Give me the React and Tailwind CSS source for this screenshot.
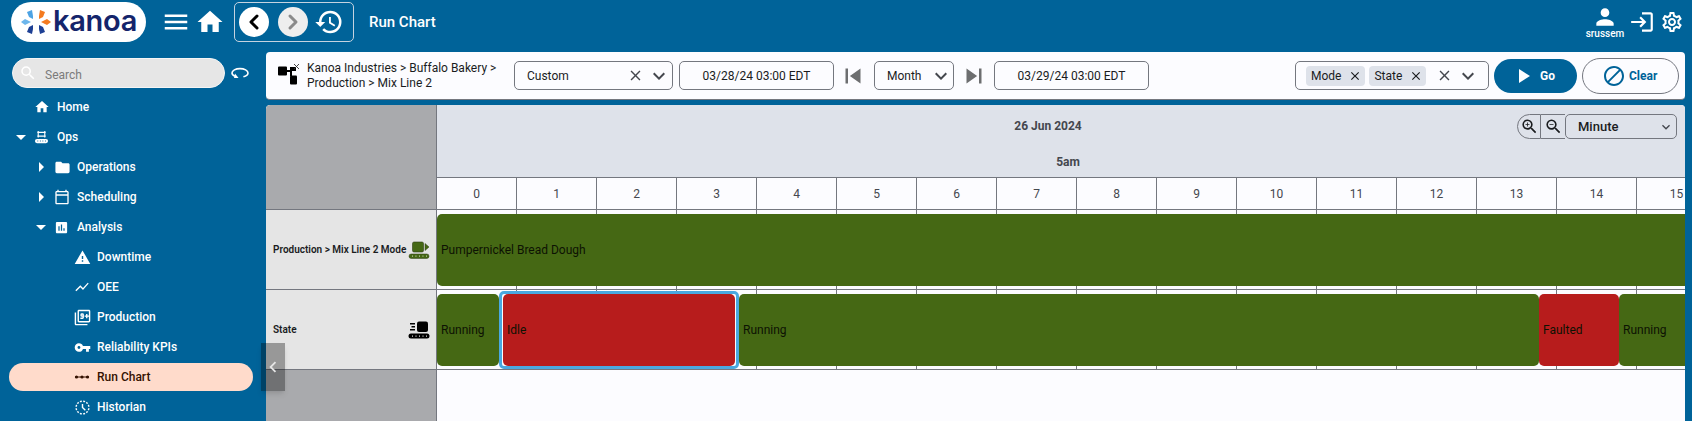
import {
  MdMenu, MdHome, MdHistory, MdPerson, MdLogin, MdOutlineSettings, MdChevronLeft,
  MdSearch, MdFolder, MdOutlineCalendarToday, MdAssessment, MdWarning, MdShowChart, MdOutlineFilter9Plus,
  MdVpnKey, MdOutlineHistoryToggleOff, MdArrowDropDown, MdArrowRight, MdClose, MdKeyboardArrowDown,
  MdSkipPrevious, MdSkipNext, MdPlayArrow, MdBlock, MdZoomIn, MdZoomOut,
} from 'react-icons/md'
import { ChevronLeft, ChevronRight } from 'lucide-react'

const TICKS = Array.from({ length: 16 }, (_, i) => i)

function Logo() {
  return (
    <div className="flex items-center w-[135px] h-[40px] rounded-full bg-white pl-[10px] gap-[2px]">
      <svg viewBox="0 0 30 26" className="w-[30px] h-[26px] shrink-0">
        <path d="M6 3l5-2 1 6 0 3-4-2z" fill="#4da3e4" />
        <path d="M18 7l1-6 5 2-2 5-4 2z" fill="#f47b20" />
        <path d="M0 13l4-3 6 3-6 3z" fill="#6db6ec" />
        <path d="M20 13l6-3 4 3-4 3z" fill="#f47b20" />
        <path d="M8 18l4-2 0 4-1 5-5-2z" fill="#1d3f94" />
        <path d="M18 16l4 2 2 5-5 2-1-5z" fill="#1d3f94" />
      </svg>
      <span className="font-['Inter',sans-serif] font-semibold text-[29px] leading-none tracking-[-0.3px] text-[#14246b] pb-[3px]">kanoa</span>
    </div>
  )
}

function TopBar() {
  return (
    <div className="flex items-center h-[52px] shrink-0 pb-[8px] pl-[11px] pr-[8px] text-white">
      <Logo />
      <MdMenu className="w-[30px] h-[30px] ml-[15px]" />
      <MdHome className="w-[30px] h-[30px] ml-[4px]" />
      <div className="flex items-center h-[40px] w-[120px] ml-[9px] border border-[#c5d3e0] rounded-[5px] pl-[4px]">
        <div className="flex items-center justify-center w-[30px] h-[30px] rounded-full bg-white text-black">
          <ChevronLeft className="w-[24px] h-[24px]" strokeWidth={3} />
        </div>
        <div className="flex items-center justify-center w-[30px] h-[30px] rounded-full bg-[#eeeeee] text-[#8a8a8a] ml-[9px]">
          <ChevronRight className="w-[24px] h-[24px]" strokeWidth={3} />
        </div>
        <MdHistory className="w-[30px] h-[30px] ml-[6px]" />
      </div>
      <span className="ml-[15px] text-[15px] font-medium">Run Chart</span>
      <div className="ml-auto flex items-center">
        <div className="flex flex-col items-center w-[40px] -mt-[1px]">
          <MdPerson className="w-[26px] h-[26px]" />
          <span className="text-[10px] font-medium leading-[10px] -mt-[1px]">srussem</span>
        </div>
        <MdLogin className="w-[26px] h-[26px] ml-[4px]" />
        <MdOutlineSettings className="w-[24px] h-[24px] ml-[5px]" />
      </div>
    </div>
  )
}

function ConveyorIcon({ className }) {
  return (
    <svg viewBox="0 0 16 16" className={className} fill="none" stroke="currentColor" strokeWidth="1.2">
      <path d="M4.5 1v7M11.5 1v7M3.5 2.5h9M3.5 6.5h9" />
      <rect x="1" y="9.5" width="14" height="4.5" rx="2.25" fill="currentColor" stroke="none" />
      <path d="M3.6 11.8h.9M6.3 11.8h.9M9 11.8h.9M11.7 11.8h.9" stroke="#006399" strokeWidth="1.1" />
    </svg>
  )
}

function RunChartIcon({ className }) {
  return (
    <svg viewBox="0 0 16 16" className={className}>
      <path d="M1 8h14" stroke="currentColor" strokeWidth="1" />
      <circle cx="2.5" cy="8" r="1.6" fill="currentColor" />
      <circle cx="8" cy="8" r="1.6" fill="currentColor" />
      <circle cx="13.5" cy="8" r="1.6" fill="currentColor" />
    </svg>
  )
}

// depth 0: Home/Ops, 1: Operations/Scheduling/Analysis, 2: leaves
const NAV = [
  { label: 'Home', icon: MdHome, depth: 0, size: 'w-[16px] h-[16px]' },
  { label: 'Ops', icon: ConveyorIcon, depth: 0, caret: 'open', size: 'w-[15px] h-[15px]' },
  { label: 'Operations', icon: MdFolder, depth: 1, caret: 'closed', size: 'w-[17px] h-[17px]' },
  { label: 'Scheduling', icon: MdOutlineCalendarToday, depth: 1, caret: 'closed', size: 'w-[16px] h-[16px]' },
  { label: 'Analysis', icon: MdAssessment, depth: 1, caret: 'open', size: 'w-[15px] h-[15px]' },
  { label: 'Downtime', icon: MdWarning, depth: 2, size: 'w-[17px] h-[17px]' },
  { label: 'OEE', icon: MdShowChart, depth: 2, size: 'w-[16px] h-[16px]' },
  { label: 'Production', icon: MdOutlineFilter9Plus, depth: 2, size: 'w-[17px] h-[17px]' },
  { label: 'Reliability KPIs', icon: MdVpnKey, depth: 2, size: 'w-[17px] h-[17px]' },
  { label: 'Run Chart', icon: RunChartIcon, depth: 2, active: true, size: 'w-[16px] h-[16px]' },
  { label: 'Historian', icon: MdOutlineHistoryToggleOff, depth: 2, size: 'w-[17px] h-[17px]' },
]

function NavItem({ item }) {
  const Icon = item.icon
  const iconBox = item.depth === 0 ? 'ml-[34px]' : item.depth === 1 ? 'ml-[54px]' : 'ml-[74px]'
  const textLeft = item.depth === 2 ? 'left-[97px]' : item.depth === 1 ? 'left-[77px]' : 'left-[57px]'
  const caretLeft = item.depth === 0 ? 'left-[9px]' : 'left-[29px]'
  return (
    <div className="relative flex items-center h-[30px] shrink-0">
      {item.active && <div className="absolute left-[9px] top-[1px] w-[244px] h-[28px] rounded-full bg-[#ffdbcb]" />}
      {item.caret === 'open' && <MdArrowDropDown className={`absolute ${caretLeft} w-[24px] h-[24px]`} />}
      {item.caret === 'closed' && <MdArrowRight className={`absolute ${caretLeft} w-[24px] h-[24px]`} />}
      <Icon className={`relative ${iconBox} ${item.size} ${item.active ? 'text-[#341100]' : ''}`} />
      <span className={`absolute ${textLeft} text-[12px] font-medium ${item.active ? 'text-[#341100]' : ''}`}>{item.label}</span>
    </div>
  )
}

function Sidebar() {
  return (
    <div className="w-[266px] shrink-0 text-white flex flex-col overflow-hidden">
      <div className="flex items-center h-[30px] mt-[6px] mb-[4px] shrink-0 pl-[12px]">
        <div className="flex items-center w-[213px] h-[30px] rounded-full bg-[#e6e6e6] border border-[#f5f5f5] pl-[6px]">
          <MdSearch className="w-[18px] h-[18px] text-white" />
          <span className="ml-[8px] pt-[3px] text-[12px] text-[#7b7b7b]">Search</span>
        </div>
        <svg viewBox="0 0 18 12" className="w-[18px] h-[12px] ml-[6px]" fill="none" stroke="white" strokeWidth="1.6">
          <path d="M4 9.2C2 8.4 1 7.3 1 6c0-2.4 3.6-4.4 8-4.4s8 2 8 4.4c0 1.6-1.8 3-4.6 3.8" />
          <path d="M4 6.5l3.5 4.5H3z" fill="white" stroke="none" />
        </svg>
      </div>
      {NAV.map((item) => <NavItem key={item.label} item={item} />)}
    </div>
  )
}

function SelectBox({ children, className }) {
  return (
    <div className={`flex items-center border border-[#74777f] rounded-[5px] h-[29px] text-[12px] text-[#1a1c1e] shrink-0 ${className}`}>
      {children}
    </div>
  )
}

function Chip({ label }) {
  return (
    <div className="flex items-center h-[20px] rounded-[4px] bg-[#dee2ea] pl-[5px] pr-[3px] gap-[7px]">
      <span>{label}</span>
      <MdClose className="w-[14px] h-[14px]" />
    </div>
  )
}

function Toolbar() {
  return (
    <div className="flex items-center h-[48px] shrink-0 bg-[#fcfcff] rounded-[4px] border-b border-[#74777f] pl-[11px]">
      <div className="w-[25px] h-[25px] shrink-0">
        <svg viewBox="0 0 25 25" className="w-[25px] h-[25px]">
          <path d="M1 4.5a1 1 0 0 1 1-1h7a1 1 0 0 1 1 1v7a1 1 0 0 1-1 1H2a1 1 0 0 1-1-1z" fill="black" />
          <path d="M10 7h3V4h6v4h-4v5h-2V9h-3z" fill="black" />
          <path d="M13 13.5a1 1 0 0 1 1-1h5a1 1 0 0 1 1 1v7a1 1 0 0 1-1 1h-5a1 1 0 0 1-1-1z" fill="black" />
          <path d="M17 1l5 5M22 1l-5 5" stroke="#333" strokeWidth="0.9" />
        </svg>
      </div>
      <div className="ml-[5px] w-[191px] shrink-0 text-[12px] leading-[15px] text-[#1a1c1e]">
        Kanoa Industries &gt; Buffalo Bakery &gt; Production &gt; Mix Line 2
      </div>
      <SelectBox className="ml-[16px] w-[159px] pl-[12px] pr-[1px] justify-between">
        <span>Custom</span>
        <span className="flex items-center gap-[3px]">
          <MdClose className="w-[17px] h-[17px] text-[#44474e]" />
          <MdKeyboardArrowDown className="w-[24px] h-[24px] text-[#44474e]" />
        </span>
      </SelectBox>
      <SelectBox className="ml-[6px] w-[155px] justify-center">03/28/24 03:00 EDT</SelectBox>
      <MdSkipPrevious className="ml-[4px] w-[30px] h-[30px] text-[#6d6e70] shrink-0" />
      <SelectBox className="ml-[6px] w-[80px] pl-[12px] pr-0 justify-between">
        <span>Month</span>
        <MdKeyboardArrowDown className="w-[24px] h-[24px] text-[#44474e]" />
      </SelectBox>
      <MdSkipNext className="ml-[5px] w-[30px] h-[30px] text-[#6d6e70] shrink-0" />
      <SelectBox className="ml-[5px] w-[155px] justify-center">03/29/24 03:00 EDT</SelectBox>
      <SelectBox className="ml-[146px] w-[194px] pl-[10px] pr-[8px] justify-between">
        <span className="flex items-center gap-[4px]">
          <Chip label="Mode" />
          <Chip label="State" />
        </span>
        <span className="flex items-center gap-[3px]">
          <MdClose className="w-[17px] h-[17px] text-[#44474e]" />
          <MdKeyboardArrowDown className="w-[24px] h-[24px] text-[#44474e]" />
        </span>
      </SelectBox>
      <div className="ml-[5px] flex items-center w-[83px] h-[34px] rounded-full bg-[#006399] text-white text-[12px] font-bold pl-[17px] shrink-0">
        <MdPlayArrow className="w-[24px] h-[24px] mr-[5px]" />
        Go
      </div>
      <div className="ml-[5px] flex items-center w-[97px] h-[36px] rounded-full border border-[#74777f] text-[#006399] text-[12px] font-bold pl-[19px] shrink-0">
        <MdBlock className="w-[24px] h-[24px] mr-[3px]" />
        Clear
      </div>
    </div>
  )
}

function ChartHeader() {
  return (
    <div className="flex h-[105px] shrink-0">
      <div className="w-[171px] shrink-0 bg-[#a9aaad] border-r border-b border-[#74777f] rounded-tl-[4px]" />
      <div className="flex-1 min-w-0 flex flex-col">
        <div className="relative h-[73px] bg-[#dee2ea] border-b border-[#74777f] text-[12px] font-bold text-[#44474e]">
          <div className="absolute left-0 right-[26px] top-[12px] text-center">26 Jun 2024</div>
          <div className="absolute left-[14px] right-0 top-[48px] text-center">5am</div>
          <div className="absolute right-[8px] top-[9px] flex items-center h-[25px] text-[#1a1c1e]">
            <div className="flex items-center justify-center w-[24px] h-[25px] border border-[#74777f] rounded-l-full">
              <MdZoomIn className="w-[19px] h-[19px]" />
            </div>
            <div className="flex items-center justify-center w-[24px] h-[25px] border-y border-[#74777f]">
              <MdZoomOut className="w-[19px] h-[19px]" />
            </div>
            <div className="flex items-center justify-between w-[112px] h-[25px] border border-[#74777f] rounded-[5px] pl-[12px] pr-[2px] text-[13px] font-medium text-[#1a1c1e]">
              <span>Minute</span>
              <MdKeyboardArrowDown className="w-[16px] h-[16px] text-[#44474e]" />
            </div>
          </div>
        </div>
        <div className="flex h-[32px] bg-[#fcfcff] border-b border-[#74777f] overflow-hidden">
          {TICKS.map((t) => (
            <div key={t} className="w-[80px] shrink-0 border-r border-[#74777f] flex items-center justify-center text-[12px] text-[#44474e]">{t}</div>
          ))}
        </div>
      </div>
    </div>
  )
}

function ModeIcon() {
  return (
    <svg viewBox="0 0 22 18" className="w-[22px] h-[18px]">
      <rect x="4.5" y="1" width="11" height="10" rx="1.5" fill="#456814" stroke="#2c3d12" strokeWidth="0.6" />
      <path d="M17 2.5l4 3.5-4 3.5z" fill="#456814" stroke="#2c3d12" strokeWidth="0.5" />
      <rect x="1" y="13" width="20" height="4.4" rx="2.2" fill="#456814" stroke="#2c3d12" strokeWidth="0.5" />
      <path d="M4 15.2h.9M7.5 15.2h.9M11 15.2h.9M14.5 15.2h.9M18 15.2h.9" stroke="#c8d2b8" strokeWidth="1.2" />
    </svg>
  )
}

function StateIcon() {
  return (
    <svg viewBox="0 0 22 18" className="w-[22px] h-[18px]">
      <rect x="9" y="0.5" width="11" height="10.5" rx="2" fill="black" />
      <path d="M2 2h5v1.6H2zM3.5 5h3.5v1.6H3.5zM2 8h5v1.6H2z" fill="black" />
      <rect x="0.5" y="12.6" width="21" height="5" rx="2.5" fill="black" />
      <path d="M4 15.1h1M7.5 15.1h1M11 15.1h1M14.5 15.1h1M18 15.1h1" stroke="#d9d9d9" strokeWidth="1.3" />
    </svg>
  )
}

function Bar({ color, className, label }) {
  return (
    <div className={`h-[72px] rounded-[5px] flex items-center pl-[4px] text-[12px] text-[#0d1203] shrink-0 ${color} ${className}`}>
      {label}
    </div>
  )
}

function ChartRow({ label, icon, children }) {
  return (
    <div className="flex h-[80px] shrink-0">
      <div className="w-[171px] shrink-0 bg-[#e5e5e5] border-r border-b border-[#74777f] flex items-center justify-between pl-[7px] pr-[6px] text-[10px] font-semibold text-[#1a1c1e] whitespace-nowrap">
        <span>{label}</span>
        {icon}
      </div>
      <div className="flex-1 min-w-0 border-b border-[#74777f] overflow-hidden bg-[repeating-linear-gradient(90deg,transparent_0,transparent_79px,#74777f_79px,#74777f_80px)] flex items-start pt-[4px]">
        {children}
      </div>
    </div>
  )
}

function Chart() {
  return (
    <div className="mt-[5px] flex-1 min-h-0 flex flex-col bg-[#fcfcff] rounded-t-[4px] overflow-hidden">
      <ChartHeader />
      <ChartRow label="Production > Mix Line 2 Mode" icon={<ModeIcon />}>
        <Bar color="bg-[#456814]" className="w-[1300px]" label="Pumpernickel Bread Dough" />
      </ChartRow>
      <ChartRow label="State" icon={<StateIcon />}>
        <Bar color="bg-[#456814]" className="w-[62px]" label="Running" />
        <div className="shrink-0 w-[240px] h-[78px] -mt-[3px] border-[3px] border-[#4aa8e0] rounded-[5px] bg-[#fcfcff] flex items-center justify-center">
          <Bar color="bg-[#b71c1c]" className="w-[232px]" label="Idle" />
        </div>
        <Bar color="bg-[#456814]" className="w-[800px]" label="Running" />
        <Bar color="bg-[#b71c1c]" className="w-[80px]" label="Faulted" />
        <Bar color="bg-[#456814]" className="w-[120px]" label="Running" />
      </ChartRow>
      <div className="flex flex-1">
        <div className="w-[171px] shrink-0 bg-[#a9aaad] border-r border-[#74777f]" />
        <div className="flex-1 bg-[#fcfcff]" />
      </div>
    </div>
  )
}

export default function App() {
  return (
    <div className="relative w-full h-[421px] overflow-hidden bg-[#006399] flex flex-col font-['Roboto',sans-serif]">
      <TopBar />
      <div className="flex flex-1 min-h-0">
        <Sidebar />
        <div className="flex-1 min-w-0 flex flex-col pr-[7px]">
          <Toolbar />
          <Chart />
        </div>
      </div>
      <div className="absolute left-[261px] top-[343px] w-[24px] h-[48px] bg-[#00000055] shadow-md flex items-center justify-center text-[#e5e5e5]">
        <MdChevronLeft className="w-[22px] h-[22px]" />
      </div>
    </div>
  )
}
